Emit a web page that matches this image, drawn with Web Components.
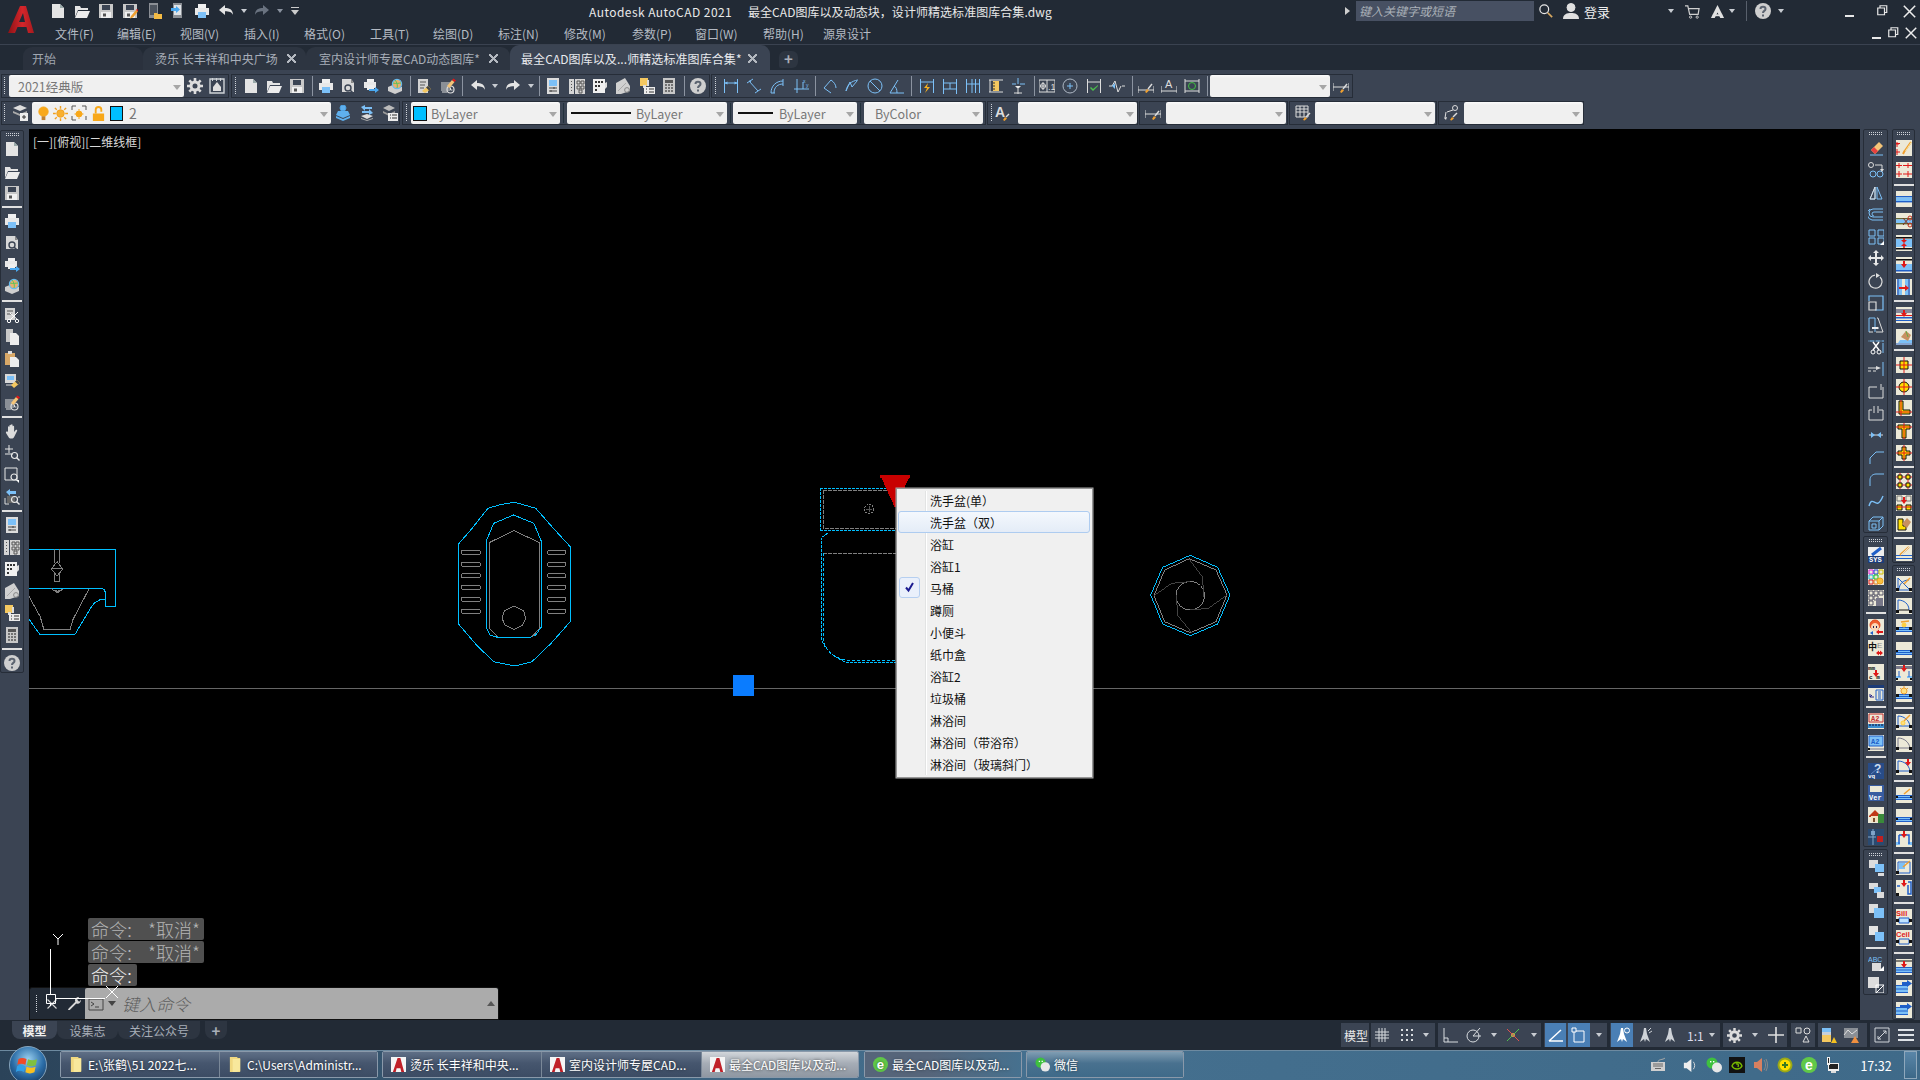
<!DOCTYPE html>
<html lang="zh"><head><meta charset="utf-8"><title>AutoCAD 2021</title>
<style>
html,body{margin:0;padding:0;width:1920px;height:1080px;overflow:hidden;background:#000}
body{font:12px "Noto Sans CJK SC","Noto Sans",sans-serif}
</style></head><body>
<cad-app>
  <cad-header></cad-header>
  <cad-tabs></cad-tabs>
  <cad-toolbars></cad-toolbars>
  <cad-work>
    <cad-canvas>
      <ctx-menu>
        <ctx-item>洗手盆(单）</ctx-item>
        <ctx-item hot>洗手盆（双）</ctx-item>
        <ctx-item>浴缸</ctx-item>
        <ctx-item>浴缸1</ctx-item>
        <ctx-item checked>马桶</ctx-item>
        <ctx-item>蹲厕</ctx-item>
        <ctx-item>小便斗</ctx-item>
        <ctx-item>纸巾盒</ctx-item>
        <ctx-item>浴缸2</ctx-item>
        <ctx-item>垃圾桶</ctx-item>
        <ctx-item>淋浴间</ctx-item>
        <ctx-item>淋浴间（带浴帘）</ctx-item>
        <ctx-item>淋浴间（玻璃斜门）</ctx-item>
      </ctx-menu>
    </cad-canvas>
  </cad-work>
  <cad-status></cad-status>
  <cad-taskbar></cad-taskbar>
</cad-app>
<script>
const S=(d,c='#e4e4e4',w=1)=>`<path d="${d}" fill="none" stroke="${c}" stroke-width="${w}"/>`;
const F=(d,c='#e4e4e4')=>`<path d="${d}" fill="${c}"/>`;
const R=(x,y,w,h,c='#e4e4e4')=>`<rect x="${x}" y="${y}" width="${w}" height="${h}" fill="${c}"/>`;
const O=(x,y,r,c='#e4e4e4',w=1,f='none')=>`<circle cx="${x}" cy="${y}" r="${r}" fill="${f}" stroke="${c}" stroke-width="${w}"/>`;
const BL='#7cc0f7',OR='#f0a030',RD='#e01818',DK='#3b4453',BE='#ece9d8',BN='#1f5fc8';
const pencil=F('M9 13l5-6 2 1.6-5 6-3 .8z',OR)+F('M14 7l1-1 2 1.6-1 1z',RD);
const brush=F('M7 14l2-3 2 1.5-2.5 2.5z',OR)+S('M10 11l4-5','#ddd',1.4);
const mag=O(10.5,10.5,3,'#e8e8e8',1.2)+S('M12.7 12.7l2.8 2.8','#e8e8e8',1.4);
const page=F('M2 1h8l4 4v10H2z')+F('M10 1l4 4h-4z','#9aa');
const floppy=R(1,1,14,14,'#c8c8c8')+R(4,2,8,5,DK)+R(3,9,10,6,'#f0f0f0')+R(5,10.5,3,3,'#555');
const printer=R(4,1,8,4,'#f0f0f0')+R(1,5,14,7,'#e8e8e8')+R(4,9,8,6,BL);
const globe=F('M1 9l7-3 7 3v4l-7 3-7-3z','#cfcfcf')+O(10,6,4.6,'#66bbee',1.2,'#e8b070')+S('M6 5c3 1 6 0 8 0M8 2c2 2 3 6 2 8','#5ac45a');
const arrD=(x,y,c=RD)=>F(`M${x-3} ${y}h6l-3 4z`,c)+R(x-1,y-3,2,3,c);
const wall=(c=BN)=>R(0,5,16,1.4,c)+R(0,10,16,1.4,c)+R(0,6.4,16,3.6,BL);
const win=(extra='')=>R(0,0,16,16,BE)+R(0,8,16,5,BL)+S('M0 8.5h16M0 10.5h16M0 12.5h16',BN)+extra;
const bk=(...p)=>R(0,0,16,16,BE)+p.join('');
const ICONS={
new:page,
open:F('M1 3h5l1 2h7v2H4L1 14z')+F('M4 8h12l-3 7H1z','#ececec'),
save:floppy,
saveas:floppy+pencil,
mopen:R(3,0,9,15,'#8b8f95')+R(4,2,7,10,'#4d545e')+F('M8 10h3l1 1h4v5H8z','#f4bb44'),
msave:R(3,0,9,15,'#8b8f95')+R(4,2,7,10,'#dfe3e8')+F('M1 5h5V3l4 3.5L6 10V8H1z','#4aa8f0'),
print:printer,
preview:F('M2 1h9l3 4v9H2z','#d8d8d8')+F('M11 1l3 4h-3z','#888')+O(8,10,3,'#3b4453',1.4)+S('M10 12l3.5 3.5',DK,1.6),
plot:R(4,1,7,3,'#f0f0f0')+R(1,4,12,6,'#e8e8e8')+R(4,7,7,5,'#eee')+F('M6 11h6V9l4 3-4 3v-2H6z','#4aa8f0'),
pub:globe,
props3:R(2,1,10,14,'#d4d4d4')+S('M4 4h6M4 7h5M4 10h4','#555')+F('M6 13l6-5 3 3-6 4z','#f4c860')+F('M10 9.500l2-1.500 3 3-2 1.500z','#444'),
mark:R(1,4,9,9,'#8a8f96')+S('M2 14h5','#ddd')+O(10.500,11.500,3.500,'#ddd',1.200)+S('M10.500 9.500v2.500h2','#ddd')+F('M7 8l5-6 2.500 2-5 6z','#f4c478')+F('M12 2l1.500-1.500 2.500 2L14.500 4z',RD),
undo:F('M1 7l6-5v3c4 0 8 1 8 7-1-3-4-3.800-8-3.800V12z','#e4e4e4'),
redo:F('M15 7L9 2v3C5 5 1 6 1 12c1-3 4-3.800 8-3.800V12z','#e4e4e4'),
redoD:F('M15 7L9 2v3C5 5 1 6 1 12c1-3 4-3.800 8-3.800V12z','#6a7380'),
gear:O(8,8,4,'#ddd',3)+S('M8 0v3M8 13v3M0 8h3M13 8h3M2.300 2.300l2 2M11.700 11.700l2 2M13.700 2.300l-2 2M4.300 11.700l-2 2','#ddd',2.6),
wspace:S('M1 1h14v14H1z','#cfd3d8',1.4)+F('M4 9l4-5 4 5v4H4z','#dfdfdf')+R(3,0,1,3,'#cfd3d8')+R(7,0,1,3,'#cfd3d8')+R(11,0,1,3,'#cfd3d8'),
cut:R(1,1,10,12,'#d4d4d4')+S('M3 4h6M3 7h5','#555')+S('M6 6l8 7M14 5l-8 8','#fff',1)+O(5,14,1.7,'#fff')+O(13,14,1.7,'#fff'),
copy:F('M2 0h7v4h3v9H2z','#c8c8c8')+F('M6 4h6l3 3v9H6z','#ededed'),
paste:R(1,2,10,12,'#d8a868')+R(4,0,4,3,'#ddd')+F('M6 6h6l3 3v7H6z','#ededed'),
match:R(1,1,11,9,'#d8d8d8')+R(3,3,7,4,BL)+S('M2 12h6','#ddd')+F('M7 12l6-5 3 3-6 5z','#f4c860')+F('M11 8.500l2-1.500 3 3-2 1.500z','#444'),
hand:F('M4 8V4c0-1 1.500-1 1.500 0v3V2.500c0-1 1.500-1 1.500 0V7V2c0-1 1.600-1 1.600 0v5V3.500c0-1 1.500-1 1.500 0V9l1.600-2c.8-.8 2 0 1.400 1l-3 6c-.5 1-1.500 1.500-2.500 1.500H7c-1 0-2-.5-2.500-1.500L2 10c-.5-1 .8-2 1.500-1z','#dcdcdc'),
zoomrt:S('M1 4h8M5 0v8M1 9h8','#e8e8e8')+mag,
zoomw:S('M1 1h12v12H1z','#e8e8e8')+O(10,10,3,'#e8e8e8',1.2,DK)+F('M12 13l3 3v-3z','#fff'),
zoomp:S('M1 9v6h4M15 9v-2','#ddd')+R(3,7,8,7,'#666')+F('M2 3l4-3v2h6v3H6v2z',BL)+mag,
pal:R(2,0,12,16,'#dcdcdc')+R(4,2,8,6,BL)+S('M4 10h8M4 13h8M9 9v2M6 12v2','#444'),
dc:R(0,1,16,15,'#d4d4d4')+R(5,1,1,15,DK)+S('M8 3h3v3H8zM12 3h3v3h-3zM8 8h3v3H8zM12 8h3v3h-3zM10 12h3v3h-3z','#555')+R(2,3,1,1,'#555')+R(2,6,1,1,'#555')+R(2,9,1,1,'#555')+R(2,12,1,1,'#555'),
tool:F('M1 1h12v14H1z','#f0f0f0')+R(3,3,2,2,'#333')+R(6,3,2,2,'#333')+R(9,3,2,2,'#333')+R(3,7,2,2,'#333')+R(6,7,2,2,'#333')+R(3,11,2,2,'#333')+F('M13 5l2-1v5l-2 2z','#ddd'),
sheet:F('M1 5l9-5 5 8v5l-9 3H1z','#d0d0d0')+O(12,12,2.400,'#888')+S('M3 13l8-8','#aaa'),
markup:R(1,0,8,8,'#f4c860')+R(4,7,3,3,'#ddd')+R(8,2,2,6,'#ddd')+R(5,9,11,7,'#ececec')+S('M7 11h1M10 11h5M7 14h1M10 14h5','#333'),
calc:R(2,0,12,16,'#c8c8c8')+R(4,2,8,3,'#555')+S('M4 7h2M7 7h2M10 7h2M4 10h2M7 10h2M10 10h2M4 13h2M7 13h2M10 13h2','#555',1.500),
help:`<circle cx="8" cy="8" r="8" fill="#cfcfcf"/>`+S('M5.500 6c0-3 5-3 5 0 0 2-2.500 1.800-2.500 4','#5c6470',2)+R(7,11.500,2,2,'#5c6470'),
dimlin:S('M1.500 1v14M14.500 1v14M1.500 5h13',BL)+F('M1.500 5l3-1.500v3zM14.500 5l-3-1.500v3z',BL),
dimali:S('M1 5l6-4M9 15l6-4M3 3l9 10',BL)+S('M3 3l2 .5',BL),
dimarc:S('M1 15c0-7 5-12 12-12M1 15h4M4 15c0-6 4-9 9-9M13 1v7',BL),
dimord:S('M3 1v14M0 11h15M9 11v-7',BL)+`<text x="9" y="5" font-size="5" fill="${BL}" font-family="Liberation Sans">x</text><text x="12" y="9" font-size="5" fill="${BL}" font-family="Liberation Sans">y</text>`,
dimrad:S('M2 15h0M2 10L9 2M2 10l7 5M9 2c3 2 5 5 5 8',BL),
dimjog:S('M2 13L6 4l2 5 5-6M2 13c1-6 5-10 12-11',BL),
dimdia:O(8,8,7,BL)+S('M3 3l10 10',BL),
dimang:S('M1 15h14M1 15L9 2M5 8c2 1 3 3 3 7',BL),
dimqk:S('M1.500 1v14M14.500 1v14M1.500 4h13',BL)+F('M9 5L5 10h3l-2 5 5-6H8z','#f4b020'),
dimbase:S('M1.500 1v15M14.500 1v15M1.500 5h13M1.500 11h13M8 5v6',BL),
dimcont:S('M1.500 1v14M7 1v14M10.500 1v14M14.500 1v14M1.500 6h13',BL),
dimspc:S('M1 2h14M1 14h14','#ddd')+R(5,3,6,10,'#f4c860')+S('M5 5h2M5 8h2M5 11h2','#333')+S('M2 2v12','#ddd'),
dimbrk:S('M8 0v6M2 6h4M10 6h5',BL)+S('M8 11v5M4 15h8','#ddd')+F('M5 8h6l-3 3z','#e8e8e8'),
tol:S('M0 2h16v12H0z','#ddd')+O(4,8,2.500,'#ddd')+S('M8 2v12M4 4v8M1 8h6','#ddd')+`<text x="9" y="12" font-size="9" fill="#ddd" font-family="Liberation Sans">.1</text>`,
ctr:O(8,8,7,'#aeb8c4')+S('M8 5v6M5 8h6',BL),
insp:S('M1.500 1v14M14.500 1v14M1.500 4h13','#ddd')+F('M4 10l3 3 5-5v-1L7 11l-2-2z','#4cc04c'),
jog:S('M0 8h3M13 8h3M3 8l3-5 3 11 3-6','#ddd')+F('M3 8l3-3v6z',BL),
dimed:S('M0 8v7M16 8v7M0 12h16','#ddd')+brush,
dimtxt:S('M0 8v7M16 8v7M0 13h16','#ddd')+`<text x="4" y="10" font-size="11" fill="#ddd" font-family="Liberation Sans">A</text>`,
dimup:S('M1 1v14M15 1v14M1 3h14M1 13h14','#ddd')+O(8,8,3.500,'#42c042'),
dimsty:S('M0 5v8M16 5v8M0 9h16','#ddd')+brush,
txtsty:`<text x="1" y="12" font-size="14" font-weight="bold" fill="#ddd" font-family="Liberation Sans">A</text>`+F('M9 15l2-3 2 1.500-2.500 2.500z',OR)+S('M12 12l3-3','#ddd',1.400),
tblsty:S('M1 1h12v11H1zM1 4h12M1 7h12M5 1v11M9 1v11','#ddd')+F('M8 15l2-3 2 1.500-2.500 2z',OR)+S('M11 12l4-4','#ddd',1.500),
mlsty:O(12,3,2.500,'#ddd')+S('M10 5L4 7M3 7L2 13','#ddd')+F('M1 13l2 2 1-3z','#ddd')+F('M7 15l2-3 2 1.500-2.500 2z',OR)+S('M10 12l4-4','#ddd',1.400),
layer:F('M1 3l7-3 7 3-7 3z','#ddd')+F('M1 6l7 3 7-3v2l-7 3-7-3z','#aaa')+R(8,8,8,8,'#ececec')+S('M12 10v4M10 12h4','#333'),
laycur:O(8,3,3,'#4a9ee0',1,'#5fb0ee')+F('M3 6h10l2 4-7 3-7-3z','#5fb0ee')+F('M1 11l7 3 7-3v2l-7 3-7-3z','#5fb0ee'),
layprev:F('M2 2L6 0v2h7v2H6v2zM14 8l-4 2V8H3V6h7V4z',BL)+F('M2 11l6-2 6 2-6 3z','#ddd')+F('M2 13l6 2 6-2v1l-6 2-6-2z','#aaa'),
laystat:F('M1 3l6-3 6 3-6 3z','#bbb')+F('M1 6l6 3 6-3v2l-6 3-6-3z','#999')+R(6,8,10,8,'#ececec')+S('M8 10h1M8 13h1M10 10h5M10 13h5','#333'),
bulb:O(8,6,5,'#f8a81a',1,'#f8a81a')+R(6,11,4,4,'#c08030'),
sun:O(8,8,4,'#f0a020',1,'#f8b030')+S('M8 0v3M8 13v3M0 8h3M13 8h3M2 2l2 2M12 12l2 2M14 2l-2 2M4 12l-2 2','#f0a020',1.500),
frz:S('M1 5V1h4M11 1h4v4M1 11v4h4M15 11v4','#555')+O(8,9,3,'#f8a81a',1,'#f8a81a')+S('M8 4v1.500M8 12.500V14M3.500 9H5M11 9h1.500','#f8a81a'),
lock:R(2,8,12,8,'#f8a81a')+S('M5 8V4c0-4 6-4 6 0v2','#f8a81a',2),
erase:F('M3 10l8-8 4 4-8 8z','#f4c478')+F('M3 10l3-3 4 4-3 3z','#e84040')+S('M2 15h13',BL),
cpy:O(3,3,2.500,'#ddd')+S('M7 3h7v4','#ddd')+O(5,12,3,BL)+O(12,12,3,BL)+F('M12 7l2 3 2-3z','#ddd'),
mirror:S('M2 14L7 2v12zM9 2l5 12H9z',BL)+S('M2 14L7 2v12z','#ddd'),
offset:S('M15 2H5a4 4 0 0 0 0 8h10M15 5H6a2 2 0 0 0 0 4M15 13H4a6 6 0 0 1-2-11',BL),
array:S('M1 1h6v6H1zM10 1h6v6h-6zM1 9h6v6H1z',BL)+S('M10 9h6v6h-6z',BL)+F('M12 16l4-4v4z','#fff'),
move:S('M8 1v14M1 8h14','#e8e8e8',2)+F('M8 0l3 3H5zM8 16l3-3H5zM0 8l3-3v6zM16 8l-3-3v6z','#e8e8e8'),
rotate:S('M12 4a6.500 6.500 0 1 1-5-1.800','#ddd',1.200)+F('M8 0v5l4-2.500z','#ddd'),
scale:S('M1 6V1h14v14H7',BL,1.200)+S('M1 7h7v8H1z','#ddd',1.200),
stretch:S('M1 15V1h6v14',BL)+S('M9 1h1l5 14H8','#ddd')+S('M1 15h4','#ddd')+F('M4 10h6l-2-2 3 3-3 3 2-2H4z','#eee'),
trim:S('M0 2h16',BL)+R(0,1.500,2,1,DK)+R(6,1.500,2,1,DK)+R(12,1.500,2,1,DK)+S('M5 3l6 8M11 3l-6 8','#fff',1.400)+O(5,13,2,'#fff')+O(11,13,2,'#fff')+S('M15 4v10',BL),
extend:S('M15 1v14',BL)+S('M0 7h8M0 10h3M5 10h3','#ddd')+F('M8 5l5 2-5 2z','#ddd'),
brk:S('M1 4v11h14V4M1 4h8M13 1v6','#ddd'),
brk2:S('M1 5v10h14V5M5 5v0M1 5h3M11 5h4M6 1v7M10 1v7','#ddd'),
join:S('M1 8h14','#ddd')+F('M3 5l4 3-4 3zM13 5L9 8l4 3z',BL),
chamfer:S('M2 15V9l6-6h8',BL),
fillet:S('M2 15V9c0-4 3-6 6-6h8',BL),
spline:S('M1 13c4-13 7 7 14-10',BL,1.400),
box3:S('M1 6v9h10V6zM1 6l4-4h10v9l-4 4M11 6l4-4M4 9h4v4H4z',BL),
sys:R(0,0,16,16,'#1c3c78')+R(0,0,16,9,'#eee')+S('M4 8L13 1',BN,3)+`<text x="1" y="15" font-size="7" font-weight="bold" fill="#fff" font-family="Liberation Mono">SYS</text>`,
cgrid:R(0,0,16,16,BE)+S('M1 1h4v4H1z','#e020e0')+S('M6 1h4v4H6z','#2040e0')+S('M11 1h4v4h-4z','#d0c000')+S('M1 6h4v4H1z','#20c0e0')+S('M6 6h4v4H6z','#20c020')+S('M1 11h4v4H1z','#e02020')+S('M6 11h4v4H6z','#e08020')+O(12,12,3,'#e8a020',1,'#f8c040'),
ggrid:R(0,0,16,16,BE)+S('M1 1h4v4H1zM6 1h4v4H6zM11 1h4v4h-4zM1 6h4v4H1zM6 6h4v4H6zM1 11h4v4H1z','#556')+R(8,8,7,8,'#778'),
anime:R(0,0,16,16,BE)+O(7,6,5,'#e04820',1,'#f06030')+O(7,8,3.500,'#fcd8b8',1,'#fcd8b8')+R(5,7,1,2,'#225')+R(8,7,1,2,'#225')+F('M8 13l3-2.500v1.500h4v2h-4v1.500z',RD)+F('M8 13h0M2 14l3-2v4z',BN),
zhe:R(0,0,16,16,BE)+`<text x="0" y="10" font-size="9" font-weight="bold" fill="#111" font-family="Noto Sans CJK SC">中</text><text x="9" y="8" font-size="8" fill="#888" font-family="Liberation Sans">E</text>`+F('M8 13l3-2.500V12h1V10.500l3 2.500-3 2.500V14h-1v1.500z',RD),
mmcm:R(0,0,16,16,BE)+`<text x="0" y="6" font-size="6" font-weight="bold" fill="#111" font-family="Liberation Mono">mm</text><text x="1" y="15" font-size="6" font-weight="bold" fill="#111" font-family="Liberation Mono">c m</text>`+arrD(8,9),
lstb:R(0,0,16,16,BE)+R(0,0,16,3,'#1c3c78')+S('M8 5h7v10H8zM10 7h3M10 9h3M10 11h3M10 13h3',BN)+S('M2 9v3h4M4 10l-2 2','#228'),
a2a:R(0,0,16,16,BE)+S('M1 1h14v8H1z','#c03030')+`<text x="3" y="8" font-size="7" font-weight="bold" fill="#c03030" font-family="Liberation Mono">A2</text>`+R(0,11,16,4,'#3b8ed0')+S('M2 11v2M5 11v2M8 11v2M11 11v2M14 11v2','#113'),
a2b:R(0,0,16,16,BE)+R(1,1,14,10,BL)+S('M1 1h14v10H1z',BN)+`<text x="3" y="9" font-size="7" font-weight="bold" fill="${BN}" font-family="Liberation Mono">A2</text>`+R(0,13,2,2,'#111')+S('M2 14h14','#778'),
vq:R(0,0,16,16,'#284c88')+S('M3 11l6-5 4 5','#5b80bb')+`<text x="6" y="10" font-size="12" font-weight="bold" fill="#cde" font-family="Liberation Sans">?</text><text x="0" y="15" font-size="6" font-weight="bold" fill="#fff" font-family="Liberation Mono">vq</text>`,
ver:R(0,0,16,16,'#385ca0')+R(2,1,12,6,BE)+`<text x="1" y="15" font-size="7" font-weight="bold" fill="#fff" font-family="Liberation Mono">Ver</text>`,
house:R(0,0,16,16,BE)+F('M1 9l6-6 6 6v1H1z','#c03818')+R(3,9,8,6,'#f4e0c0')+R(5,11,2,4,'#7a5030')+R(10,7,6,9,'#3a8a3a'),
mapic:R(0,0,16,16,'#2a4a70')+R(3,2,4,4,'#7aa0c8')+R(9,7,6,6,'#c02020')+S('M0 8h8M5 0v16','#88a8c8'),
ord1:R(1,0,9,8,'#dcdcdc')+R(7,4,9,8,BL)+F('M10 13h6v3h-6z','#dcdcdc'),
ord2:R(1,1,9,6,'#dcdcdc')+R(6,5,7,6,BL)+R(9,10,7,6,'#dcdcdc'),
ord3:R(1,0,9,9,'#dcdcdc')+R(6,4,10,10,BL),
ord4:R(1,0,9,9,'#e4e4e4')+R(7,6,9,9,BL),
abc:`<text x="0" y="7" font-size="7" fill="${BL}" font-family="Liberation Sans">ABC</text>`+R(4,8,9,8,'#dcdcdc')+F('M11 16l5-5v5z','#fff'),
sclb:R(0,0,11,11,'#dcdcdc')+S('M8 16V8h8v8zM8 16l8-8','#fff'),
c1:bk(S('M1 2v5M4 3v0M0 4h3M1 9v6M0 12h4',RD),R(0,3,4,1,RD),S('M8 12l7-10M7 14l1.500-3',OR,2),S('M9.500 11l6-9','#f4e0a0',1)),
c2:bk(S('M3 1v5M0 3.500h6M12 1v5M9 3.500h7M3 9v6M0 12h6M12 9v6M9 12h7',RD),S('M7 3.500h2M7 12h2',RD)),
c3:R(0,0,16,16,BE)+wall(),
c4:R(0,0,16,16,BE)+wall('#663')+S('M7 5l6 7M13 5l-6 7','#803020')+O(14,5,2,'#c03020')+O(14,12,2,'#c03020'),
c5:R(0,0,16,16,BE)+R(0,2,16,1.500,'#111')+R(0,13,16,1.500,'#111')+R(0,4,16,8,BL)+S('M8 3v3M8 10v3',RD,1.600)+F('M5 5h6L8 8zM5 11h6L8 8z',RD),
c6:R(0,0,16,16,BE)+R(0,2,16,1.500,'#111')+R(0,7,16,6,BL)+R(0,13,16,1.500,BN)+arrD(8,7),
c7:R(0,0,16,16,BE)+S('M2 0v16M13 0v16',BN,1.500)+R(3,0,3,16,BL)+R(9,0,3,16,BL)+F('M3 8h6V6l4 3-4 3v-2H3z',RD),
c8:R(0,0,16,16,BE)+R(0,2,16,4,'#889')+R(0,8,16,1,RD)+R(0,10,16,1.500,BN)+R(0,13,16,1,BN)+arrD(8,6),
c9:R(0,0,16,16,BE)+F('M2 14l2-3h12v3z',BL)+F('M5 8l5-6 5 4-3 6z','#c89060')+S('M10 2l2 6','#6a4')+S('M0 15h16',BN),
y1:R(0,0,16,16,BE)+R(4,4,8,8,'#ffe000')+S('M4 4h8v8H4z','#111')+S('M8 0v16M0 8h16',RD),
y2:R(0,0,16,16,BE)+O(8,8,5,'#111',1,'#ffe000')+S('M8 0v16M0 8h16',RD),
y3:R(0,0,16,16,BE)+F('M3 1h4v9h7v4H3z','#ffe000')+S('M3 1h4v9h7v4H3z','#111')+S('M5 0v16M0 12h16',RD),
y4:R(0,0,16,16,BE)+F('M2 2h12v4h-4v9H6V6H2z','#ffe000')+S('M2 2h12v4h-4v9H6V6H2z','#111')+S('M8 0v16M0 4h16',RD),
y5:R(0,0,16,16,BE)+F('M6 2h4v4h4v4h-4v4H6v-4H2V6h4z','#ffe000')+S('M6 2h4v4h4v4h-4v4H6v-4H2V6h4z','#111')+S('M8 0v16M0 8h16',RD),
y6:R(0,0,16,16,BE)+S('M0 4h16M0 12h16M4 0v16M12 0v16',RD)+R(2,2,4,4,'#ffe000')+R(10,2,4,4,'#ffe000')+R(2,10,4,4,'#ffe000')+R(10,10,4,4,'#ffe000')+S('M2 2h4v4H2zM10 2h4v4h-4zM2 10h4v4H2zM10 10h4v4h-4z','#111'),
y7:R(0,0,16,16,BE)+S('M1 1h5v5H1zM10 1h5v5h-5z','#777')+R(1,10,5,5,'#ffe000')+R(10,10,5,5,'#ffe000')+S('M1 10h5v5H1zM10 10h5v5h-5z','#111')+S('M0 12h16',RD)+arrD(8,5),
y8:R(0,0,16,16,BE)+F('M2 3h5v7h3v4H2z','#ffe000')+S('M2 3h5v7h3v4H2z','#111')+F('M6 8l5-6 4 4-4 6z','#c89060'),
y9:R(0,0,16,16,BE)+R(0,10,16,1,BN)+R(0,13,16,1,BN)+S('M4 10L13 2',OR,2)+S('M5 10l8-8','#ddd'),
d1:R(0,0,16,16,BE)+S('M2 14V2l12 12z',BN)+S('M3 14c0-6 4-10 10-10',BN)+R(0,12,3,3,'#111')+R(13,12,3,3,'#111')+S('M8 8l6-6',OR,1.500),
d2:R(0,0,16,16,BE)+S('M2 12V2c6 0 11 4 11 10',BN)+S('M3 12h10','#111')+R(0,12,3,3,'#111')+R(13,12,3,3,'#111'),
d3:win(S('M5 3l8-1',OR,1.400)+O(8,6,2,'#ffd040',1,'#ffd040')+R(0,8,3,3,'#111')+R(13,8,3,3,'#111')),
d4:win(R(0,8,2,2,'#111')+R(14,8,2,2,'#111')),
d5:R(0,0,16,16,BE)+R(0,1,16,3,'#778')+R(0,11,5,2,BL)+R(11,11,5,2,BL)+S('M3 6v6M13 6v6',BN)+arrD(8,3)+R(0,13,2,2,'#111')+R(14,13,2,2,'#111'),
d6:win(O(8,5,3,OR,1,'#ffe080')+S('M8 0v2M4 2l2 2M12 2l-2 2',OR)+R(0,8,3,3,'#111')+R(13,8,3,3,'#111')),
d7:R(0,0,16,16,BE)+S('M2 2v10h12M2 2c6 0 11 4 12 10',BN)+S('M8 7l6-6',OR,1.500)+R(0,11,3,3,'#111')+R(13,11,3,3,'#111')+O(7,9,2,'#ffd040',1,'#ffe080'),
d8:R(0,0,16,16,BE)+S('M2 2v10h12M2 2c6 0 11 4 12 10','#778')+R(0,11,3,3,'#111')+R(13,11,3,3,'#111'),
d9:R(0,0,16,16,BE)+S('M2 2v10h12M2 2c6 0 11 4 12 10',BN)+R(0,11,3,3,'#111')+R(13,11,3,3,'#111')+arrD(12,3),
d10:win(S('M8 7l6-5',OR,1.500)+R(0,9,2,2,'#111')+R(14,9,2,2,'#111')),
d11:win(R(0,9,2,2,'#111')+R(14,9,2,2,'#111')),
d12:R(0,0,16,16,BE)+R(0,11,4,3,BL)+R(12,11,4,3,BL)+S('M3 4h10v9M3 4v9',BN,1.500)+arrD(8,3),
d13:R(0,0,16,16,BE)+S('M2 14V3h12v11H2z',BN)+R(3,4,6,6,BL)+S('M7 8l7-6',OR,1.500)+R(0,12,3,3,'#111'),
d14:R(0,0,16,16,BE)+S('M1 6h3M12 2h3v12h-3v-9',BN,1.500)+arrD(8,3)+R(0,13,3,3,'#111'),
sill:R(0,0,16,16,BE)+`<text x="0" y="7" font-size="7.500" font-weight="bold" fill="#e01818" font-family="Liberation Sans">Sill</text>`+R(3,9,10,5,'#bfe2ff')+S('M3 9h10v5H3z',BN)+R(0,10,3,3,'#111')+R(13,10,3,3,'#111'),
ceil:R(0,0,16,16,BE)+`<text x="0" y="7" font-size="7.500" font-weight="bold" fill="#e01818" font-family="Liberation Sans">Ceil</text>`+R(3,9,10,5,BE)+S('M3 9h10v5H3z',BN)+R(0,10,3,3,'#111')+R(13,10,3,3,'#111'),
l1:R(0,0,16,16,BE)+S('M0 2h16','#111')+R(0,8,16,6,BL)+S('M0 8.500h16M0 11h16M0 13.500h16',BN)+arrD(8,5),
l2:R(0,0,16,16,BE)+R(0,5,12,8,BL)+S('M0 5.500h12M0 9h12M0 12.500h12',BN)+F('M6 2h5V0l5 3.500-5 3.500V5H6z',BN),
l3:R(0,0,16,16,BE)+R(0,5,12,8,BL)+S('M0 5.500h12M0 9h12M0 12.500h12',BN)+F('M4 3h7V1l5 3.500-5 3.500V6H4z',BN),
xx:S('M2 2l12 12M14 2L2 14','#d8d8d8',1.500),
wrench:F('M2 15l1-2 7-7c-1-2 0-5 4-5l-2 3 2 2 2-2c0 3-2 5-5 4L4 15z','#d8d8d8'),
term:S('M1 3h14v11H1z','#444')+S('M3 6l3 2-3 2M7 11h4','#444'),
search:O(6,6,5,'#e8e8e8',1.400)+S('M10 10l5 5','#d8a860',2),
user:O(8,4.500,4,'#e0e0e0',1,'#e0e0e0')+F('M0 16c0-5 4-6 8-6s8 1 8 6z','#e0e0e0'),
cart:S('M0 2h3l2 9h9l1-6H4','#cfcfcf',1.300)+O(6,14,1.200,'#cfcfcf')+O(13,14,1.200,'#cfcfcf'),
autod:F('M8 1L1 15h4l3-6 3 6h4z','#e0e0e0')+R(3,11,10,2,'#e0e0e0'),
grid:S('M1 5h14M1 8h14M1 11h14M5 1v14M8 1v14M11 1v14','#d8dce0'),
snap:`<g fill="#d8dce0"><rect x="2" y="2" width="2" height="2"/><rect x="7" y="2" width="2" height="2"/><rect x="12" y="2" width="2" height="2"/><rect x="2" y="7" width="2" height="2"/><rect x="7" y="7" width="2" height="2"/><rect x="12" y="7" width="2" height="2"/><rect x="2" y="12" width="2" height="2"/><rect x="7" y="12" width="2" height="2"/><rect x="12" y="12" width="2" height="2"/></g>`,
ortho:S('M2 1v14h14M2 11h4v4','#d8dce0'),
polar:O(7,9,6,'#d8dce0')+S('M7 9l7-8M7 9h8','#d8dce0'),
iso:S('M2 2l12 12','#e05050')+S('M14 2L8 8','#50c050')+S('M8 8l-6 6','#50c050')+O(8,8,1.500,'#e0a050'),
osn:S('M1 14h14M1 14L13 3','#fff',1.500),
trk:S('M3 4h10v11H3z','#fff')+R(1,1,4,4,'#4a7fb5')+S('M1 1h4v4H1z','#fff'),
anno1:F('M7 1h2l1 6 3 8-4-3-1 3-1-3-4 3 3-8z','#fff')+O(13,3.500,2.500,'#fff'),
anno2:F('M7 1h2l1 6 3 8-4-3-1 3-1-3-4 3 3-8z','#cfd3d8')+S('M11 4l3-3M12 6l3-2','#cfd3d8'),
anno3:F('M7 1h2l1 6 3 8-4-3-1 3-1-3-4 3 3-8z','#cfd3d8'),
plus:S('M8 0v16M0 8h16','#e0e0e0',1.600),
unit:S('M1 1h5v5H1z','#ddd')+O(12,4,3,'#ddd')+S('M8 15h6l-3-6z','#ddd'),
warn1:R(1,1,9,12,'#c8d0da')+R(1,1,9,4,BL)+F('M1 8h9v7H1z','#f4c860')+F('M10 16l3-6 3 6z','#f4c020'),
warn2:R(1,1,14,10,'#8a8f96')+S('M1 8l4-5 4 4 5-4','#ddd')+F('M8 16l4-7 4 7z','#f09040'),
full:S('M1 1h14v14H1z','#d0d4da')+S('M4 12l8-8M9 4h3v3M4 9v3h3','#d0d4da'),
ham:S('M0 3h16M0 8h16M0 13h16','#dfe3e8',2),
folder:F('M2 0h8v1h3v15H2z','#f0d880')+F('M5 2h8v13l-4 1H5z','#f8e89c'),
acad:R(0,0,16,16,'#f5f5f5')+F('M2 16L7 1h3l4 15h-3l-1-4H6l-1 4z','#c02028'),
ie:O(8,8,8,'#60c848',0,'#60c848')+`<text x="8" y="13" text-anchor="middle" font-size="14" font-weight="bold" fill="#fff" font-family="Liberation Sans">e</text>`,
wechat:O(6,6,5.500,'#3ec03e',0,'#3ec03e')+O(11,10.500,5,'#e8e8e8',0,'#e8e8e8')+R(4,4,1.400,1.400,'#fff')+R(7,4,1.400,1.400,'#fff'),
kbd:F('M1 5h14v9H1z','#cfcfcf')+S('M3 7h10M3 9h10M5 11.500h6','#666')+S('M8 5c0-3 5-2 7-4','#aaa'),
vol:F('M2 5h3l5-4v14l-5-4H2z','#eee')+S('M12 4c2 2 2 6 0 8','#ddd'),
nv:R(0,0,16,16,'#111')+S('M3 9c2-5 8-5 10 0-2 4-8 4-10 0zM7 7c2-1 3 1 2 3','#76b900',1.400),
spk:F('M2 5h3l5-4v14l-5-4H2z','#d88060')+S('M12 3c2 3 2 7 0 10M14 2c2 4 2 8 0 12','#888'),
yg:O(8,8,7.500,'#8b9a16',0,'#9aa818')+O(8,8,5.500,'#ffe000',0,'#ffe000')+S('M8 5v6M5 8h6','#3a7a20',2),
net:R(3,6,11,8,'#f0f0f0')+R(4,7,9,5,'#222')+R(6,14,5,2,'#ddd')+R(2,0,3,8,'#f0f0f0')+R(3,1,1,5,'#222'),
rst:S('M1 4h9v9H1zM4 4V1h9v9h-3','#e8e8e8',1.600),
cls:S('M1 1l14 14M15 1L1 15','#ededed',1.900),
orb:`<defs><radialGradient id="g" cx=".5" cy=".35" r=".75"><stop offset="0" stop-color="#9ad0f0"/><stop offset=".55" stop-color="#2c6ea8"/><stop offset="1" stop-color="#102f54"/></radialGradient></defs><circle cx="8" cy="8" r="7.800" fill="url(#g)" stroke="#a8c4d8" stroke-width=".3"/><path d="M4 5.500c1-.6 2-.6 3.400 0l-.5 2.400c-1.300-.6-2.300-.6-3.400 0z" fill="#f04a28"/><path d="M8 5.600c1.300.6 2.400.6 3.800 0l-.5 2.500c-1.300.6-2.500.6-3.800 0z" fill="#80c040"/><path d="M3.400 8.500c1.100-.6 2.100-.6 3.400 0l-.5 2.400c-1.300-.6-2.300-.6-3.400 0z" fill="#30a0e8"/><path d="M7.400 8.700c1.300.6 2.500.6 3.800 0l-.5 2.400c-1.300.6-2.500.6-3.800 0z" fill="#f8c020"/>`
};
const PS=`.p{flex:none;display:inline-flex;align-items:center;justify-content:center;height:100%;white-space:nowrap}`;
const place=(it,x0)=>{let c=x0;return it.map(i=>{const h=`<span class="p" style="margin-left:${i.x-c}px;width:${i.w}px">${i.h}</span>`;c=i.x+i.w;return h}).join('')};
const placeV=(it,y0)=>{let c=y0;return it.map(i=>{const h=`<span class="p" style="margin-top:${i.y-c}px;height:${i.h}px;width:100%">${i.c}</span>`;c=i.y+i.h;return h}).join('')};
const ic=(n,cx,s=16)=>({x:cx-s/2,w:s,h:`<cad-icon name="${n}" size="${s}"></cad-icon>`});
const dd=(cx,c='#c8ccd2')=>({x:cx-3,w:6,h:`<i style="width:0;height:0;border:3px solid transparent;border-top:4px solid ${c};border-bottom:0"></i>`});
const sep=(x,c='#8b93a0')=>({x,w:1,h:`<i style="width:1px;height:20px;background:${c}"></i>`});
const tx=(x,w,t,st='')=>({x,w,h:`<span style="width:100%;${st}">${t}</span>`});
const DOTS=`background-image:conic-gradient(#cfd3d9 25%,transparent 0);background-size:2px 2px`;
const grip=x=>({x,w:3,h:`<i style="width:3px;height:18px;${DOTS}"></i>`});
const combo=(a,b,inner='')=>({x:a,w:b-a,h:`<cad-combo>${inner}</cad-combo>`});
const ctx=(name,x0,x1,items)=>({x:x0,w:x1-x0,h:`<div class="g" style="width:100%">${place(items,x0+1)}</div>`});
const SET={};
const v=(n,y)=>({y:y-8,h:16,c:`<cad-icon name="${n}" size="16"></cad-icon>`});
const hs=y=>({y:y-1,h:2,c:`<i style="width:20px;height:1.500px;background:#e0e0e0"></i>`});
const hg=y=>({y:y-2,h:4,c:`<i style="width:15px;height:3px;${DOTS}"></i>`});
SET.left=[[130,673,[hg(134),v('new',149),v('open',172),v('save',193),hs(207),v('print',221),v('preview',243),v('plot',265),v('pub',286),hs(301),v('cut',315),v('copy',337),v('paste',359),v('match',381),v('mark',403),hs(417),v('hand',431),v('zoomrt',453),v('zoomw',475),v('zoomp',497),hs(511),v('pal',525),v('dc',547),v('tool',569),v('sheet',591),v('markup',613),v('calc',635),hs(649),v('help',663)]]];
SET.r1=[[129,533,[hg(133),v('erase',148),v('cpy',170),v('mirror',193),v('offset',215),v('array',237),v('move',258),v('rotate',281),v('scale',303),v('stretch',325),v('trim',347),v('extend',369),v('brk',391),v('brk2',413),v('join',435),v('chamfer',457),v('fillet',479),v('spline',501),v('box3',523)]],
[536,847,[hg(540),v('sys',555),v('cgrid',577),v('ggrid',598),hs(613),v('anime',627),v('zhe',648),v('mmcm',672),v('lstb',693),hs(707),v('a2a',721),v('a2b',743),hs(757),v('vq',771),v('ver',793),v('house',815),v('mapic',837)]],
[849,995,[hg(854),v('ord1',868),v('ord2',890),v('ord3',912),v('ord4',934),hs(948),v('abc',963),v('sclb',985)]]];
SET.r2=[[129,563,[hg(133),v('c1',148),v('c2',170),hs(185),v('c3',199),v('c4',221),v('c5',243),v('c6',265),v('c7',287),hs(301),v('c8',315),v('c9',337),hs(350),v('y1',365),v('y2',387),v('y3',408),v('y4',431),v('y5',453),hs(467),v('y6',481),v('y7',503),v('y8',524),hs(538),v('y9',553)]],
[565,1020,[hg(569),v('d1',584),v('d2',606),v('d3',627),v('d4',650),v('d5',673),v('d6',694),hs(708),v('d7',722),v('d8',744),v('d9',767),hs(781),v('d10',795),v('d11',817),v('d12',839),hs(853),v('d13',867),v('d14',888),hs(903),v('sill',917),v('ceil',938),hs(953),v('l1',967),v('l2',988),v('l3',1010)]]];

class Base extends HTMLElement{
  constructor(){super();this.attachShadow({mode:'open'})}
  connectedCallback(){if(!this._r){this._r=1;this.shadowRoot.innerHTML=this.html()}}
}
class CadIcon extends Base{html(){const s=this.getAttribute('size')||16;return `<style>:host{display:inline-block;width:${s}px;height:${s}px;line-height:0;flex:none}svg{display:block}</style><svg width="${s}" height="${s}" viewBox="0 0 16 16">${ICONS[this.getAttribute('name')]||''}</svg>`}}
class CadCombo extends Base{html(){return `<style>:host{display:flex;width:100%;height:22px;box-sizing:border-box;align-items:center;position:relative;background:linear-gradient(#fbfbfb,#f0f0f0 3px);color:#777;font-size:12.500px;border-radius:2px}
${PS}.i{display:flex;align-items:center;height:100%;flex:1;min-width:0;overflow:hidden}
.t{flex:none;width:0;height:0;border:4.500px solid transparent;border-top:5px solid #a6a6a6;border-bottom:0;margin:2px 3px 0 0}</style><div class="i"><slot></slot></div><i class="t"></i>`}}
class CadApp extends Base{html(){return `<style>:host{display:flex;flex-direction:column;width:1920px;height:1080px;background:#222a35;color:#c8ccd2;font:12px "Noto Sans CJK SC","Noto Sans",sans-serif;overflow:hidden}</style><slot></slot>`}}
class CadHeader extends Base{html(){
const row1=place([ic('new',58),ic('open',82),ic('save',106),ic('saveas',130),ic('mopen',154),ic('msave',178),ic('print',202),ic('undo',226),dd(244),ic('redoD',262),dd(280,'#8b93a0'),
{x:291,w:8,h:'<i style="width:8px;height:7px;border-top:1.500px solid #ccc;position:relative;display:block"><b style="display:block;width:0;height:0;border:4px solid transparent;border-top:5px solid #ccc;margin-top:2px"></b></i>'},
tx(589,146,'Autodesk AutoCAD 2021','color:#e8e8e8;letter-spacing:.45px'),tx(748,310,'最全CAD图库以及动态块，设计师精选标准图库合集.dwg','color:#e8e8e8;letter-spacing:.05px'),
{x:1345,w:5,h:'<i style="width:0;height:0;border:4px solid transparent;border-left:5px solid #cfcfcf;border-right:0"></i>'},
{x:1356,w:178,h:'<span style="display:block;width:100%;height:20px;line-height:20px;margin-top:0;background:#475062;color:#aab0b8;font-style:italic;padding-left:3px;box-sizing:border-box">键入关键字或短语</span>'},
ic('search',1546,14),ic('user',1571,16),tx(1584,28,'登录','color:#eee;font-size:13px'),dd(1671),ic('cart',1692,15),ic('autod',1717,15),dd(1732),
{x:1746,w:1,h:'<i style="width:1px;height:20px;background:#58606c"></i>'},ic('help',1763,16),dd(1781),
{x:1845,w:9,h:'<i style="width:9px;height:2px;background:#e8e8e8;margin-top:9px"></i>'},
ic('rst',1883,12),ic('cls',1909,13)],40);
const row2=place([[55,'文件(F)'],[117,'编辑(E)'],[180,'视图(V)'],[244,'插入(I)'],[304,'格式(O)'],[370,'工具(T)'],[433,'绘图(D)'],[498,'标注(N)'],[564,'修改(M)'],[632,'参数(P)'],[695,'窗口(W)'],[763,'帮助(H)'],[823,'源泉设计']].map(([x,t])=>tx(x,t.length==4?50:45,t,'color:#b4bac3')).concat([
{x:1872,w:9,h:'<i style="width:9px;height:2px;background:#e8e8e8;margin-top:9px"></i>'},ic('rst',1894,12),ic('cls',1911,12)]),40);
return `<style>:host{display:flex;height:45px;box-sizing:border-box;background:#222a35;border-bottom:1px solid #3a4250}${PS}
.l{flex:none;width:40px;padding:6px 0 0 8px;box-sizing:border-box}.c{flex:1;display:flex;flex-direction:column}.r{display:flex;height:22px;align-items:center}</style>
<div class="l"><svg width="26" height="28" viewBox="0 0 26 28"><defs><linearGradient id="a" x1="0" x2="1"><stop offset="0" stop-color="#8c1216"/><stop offset=".55" stop-color="#d5262b"/><stop offset="1" stop-color="#a81a1e"/></linearGradient></defs><path fill="url(#a)" d="M0 27L12 0h6l8 27h-6l-1.500-6H9.500L7 27zM11 16h6l-2-9z"/></svg></div>
<div class="c"><div class="r">${row1}</div><div class="r">${row2}</div></div>`}}
class CadTabs extends Base{html(){
return `<style>:host{display:flex;height:25px;padding-left:23px;background:#222a35;align-items:flex-end}
.t{box-sizing:border-box;display:flex;align-items:center;height:23px;border-radius:9px 9px 0 0;background:#2d3541;color:#a8aeb8;white-space:nowrap;flex:none}
.a{background:#3b4453;color:#e8eaee;height:25px;padding-top:2px}.s{background:#2a313d;color:#a0a6b0}
.x{flex:none;width:9px;height:9px;background:linear-gradient(45deg,transparent 42%,#b4b9c0 42%,#b4b9c0 58%,transparent 58%),linear-gradient(-45deg,transparent 42%,#b4b9c0 42%,#b4b9c0 58%,transparent 58%)}
.p{margin-left:9px;width:19px;height:17px;margin-bottom:2px;background:#2d3541;border-radius:6px 6px 6px 2px;color:#a8aeb8;font-size:15px;line-height:16px;text-align:center;font-weight:bold}</style>
<div class="t s" style="width:120px;padding-left:9px">开始</div>
<div class="t" style="width:163px;padding-left:12px"><span style="width:125px">烫乐 长丰祥和中央广场</span><span class="x" style="margin-left:7px"></span></div>
<div class="t" style="width:204px;padding-left:13px"><span style="width:162px">室内设计师专屋CAD动态图库*</span><span class="x" style="margin-left:8px"></span></div>
<div class="t a" style="width:260px;padding-left:11px"><span style="width:220px;letter-spacing:.08px">最全CAD图库以及...师精选标准图库合集*</span><span class="x" style="margin-left:7px"></span></div>
<div class="p">+</div>`}}
class CadToolbars extends Base{html(){
const row1=place([
ctx('',1,229,[grip(3),combo(9,184,'<span style="margin-left:9px">2021经典版</span>'),ic('gear',195),ic('wspace',217)]),
ctx('',231,710,[grip(234),ic('new',251),ic('open',274),ic('save',297),sep(312),ic('print',326),ic('preview',348),ic('plot',371),ic('pub',395),sep(410),ic('props3',424),ic('mark',448),sep(462),ic('undo',478),dd(495),ic('redo',513),dd(531),sep(539),ic('pal',553),ic('dc',577),ic('tool',600),ic('sheet',623),ic('markup',647),ic('calc',669),sep(684),ic('help',698)]),
ctx('',711,1353,[grip(714),ic('dimlin',731),ic('dimali',754),ic('dimarc',778),ic('dimord',802),sep(815),ic('dimrad',830),ic('dimjog',852),ic('dimdia',875),ic('dimang',897),sep(911),ic('dimqk',927),ic('dimbase',950),ic('dimcont',973),ic('dimspc',996),ic('dimbrk',1018),sep(1034),ic('tol',1047),ic('ctr',1070),ic('insp',1094),ic('jog',1117),sep(1132),ic('dimed',1146),ic('dimtxt',1169),ic('dimup',1192),sep(1207),combo(1210,1330),ic('dimsty',1341)])
],0);
const line=w=>`<i style="display:block;flex:none;width:${w}px;height:1.500px;background:#111"></i>`;
const row2=place([
ctx('',1,400,[grip(3),ic('layer',20),combo(32,331,`<cad-icon name="bulb" size="15" style="margin-left:4px"></cad-icon><cad-icon name="sun" size="15" style="margin-left:2px"></cad-icon><cad-icon name="frz" size="16" style="margin-left:3px"></cad-icon><cad-icon name="lock" size="15" style="margin-left:4px"></cad-icon><i style="flex:none;width:13px;height:15px;background:#00bfff;border:1px solid #111;box-sizing:border-box;margin-left:4px"></i><span style="margin-left:6px;font-size:14px">2</span>`),ic('laycur',343),ic('layprev',367),ic('laystat',390)]),
ctx('',402,986,[grip(405),combo(411,560,`<i style="flex:none;width:14px;height:15px;background:#00bfff;border:1px solid #111;box-sizing:border-box;margin-left:2px"></i><span style="margin-left:4px">ByLayer</span>`),sep(563,'#22303c'),combo(567,727,`<span style="margin-left:4px"></span>${line(60)}<span style="margin-left:5px">ByLayer</span>`),sep(730,'#22303c'),combo(733,857,`<span style="margin-left:5px"></span>${line(35)}<span style="margin-left:6px">ByLayer</span>`),sep(860,'#22303c'),combo(864,983,`<span style="margin-left:11px">ByColor</span>`)]),
ctx('',987,1138,[grip(990),ic('txtsty',1002),combo(1018,1137)]),
ctx('',1139,1288,[ic('dimsty',1153),combo(1166,1286)]),
ctx('',1289,1437,[ic('tblsty',1303),combo(1315,1435)]),
ctx('',1438,1584,[ic('mlsty',1451),combo(1464,1583)])
],0);
return `<style>:host{display:flex;flex-direction:column;height:59px;box-sizing:border-box;padding-top:4px;gap:3px;background:#3b4453}${PS}
.r{display:flex;height:24px}.g{display:flex;height:24px;box-sizing:border-box;border:1px solid #262d38;border-left-width:1px;align-items:center;background:#3b4453;overflow:hidden}</style>
<div class="r">${row1}</div><div class="r">${row2}</div>`}}
class ToolStrip extends Base{html(){const s=SET[this.getAttribute('set')];const w=this.getAttribute('w');
return `<style>:host{display:flex;flex-direction:column;width:${w}px;flex:none}${PS}
.g{box-sizing:border-box;display:flex;flex-direction:column;border:1px solid #262d38;border-radius:2px;align-items:center;width:100%;overflow:hidden;flex:none}</style>`+
(()=>{let c=129,o='';for(const [a,b,it] of s){o+=`<div class="g" style="margin-top:${a-c}px;height:${b-a}px">${placeV(it,a+1)}</div>`;c=b}return o})()}}
class CadWork extends Base{html(){return `<style>:host{display:flex;height:891px;background:#3b4453}
.l{flex:none;width:29px;box-sizing:border-box}.r{flex:none;width:60px;display:flex;padding-left:3px;gap:4px;box-sizing:border-box}</style>
<div class="l"><tool-strip set="left" w="24"></tool-strip></div><slot></slot><div class="r"><tool-strip set="r1" w="25"></tool-strip><tool-strip set="r2" w="23"></tool-strip></div>`}}
class CadCanvas extends Base{html(){
const C='#00bfff',G='#808080';
let slots='';[217,253,287,322,358,394].forEach(y=>{slots+=`<rect x="1206" y="${y-6}" width="49" height="12" rx="4"/><rect x="1431" y="${y-6}" width="47" height="12" rx="4"/>`});
return `<style>:host{display:block;width:1831px;height:891px;position:relative;background:#000;flex:none}
svg{display:block}.lb{position:absolute;left:4px;top:4px;color:#d8d8d8;font-size:12px;line-height:17px;white-space:nowrap}
.nsv *{vector-effect:non-scaling-stroke}
</style>
<svg width="1831" height="891" viewBox="29 129 1831 891" fill="none" shape-rendering="crispEdges">
<path d="M29 688h1831" stroke="#666"/>
<rect x="733" y="675" width="21" height="21" fill="#0a7cff"/>
<g class="nsv" transform="translate(0,480) scale(.3827,.33333)" stroke="${C}">
<path d="M76 208H302V380H276V345Q276 325 262 325H76"/>
<path d="M276 360H260Q248 365 240 378L195 465H105L76 418"/>
<g stroke="${G}">
<path d="M232 328L190 420 183 450H115L105 410 76 350"/>
<path d="M142 208V250M155 208V250M142 280V304H156V280M134 267H164M149 245L164 267 149 288 134 267ZM134 326L150 338 166 326M142 330L150 334 158 330"/>
</g>
<path d="M1198 192L1230 150 1275 85 1310 73 1345 67 1400 85 1450 150 1490 200V425L1440 490 1390 545 1345 558 1290 545 1245 495 1198 432Z"/>
<path d="M1270 185L1290 130 1342 105 1395 130 1415 185V440L1400 465 1385 472H1300L1280 465 1270 440Z"/>
<g stroke="${G}">
<path d="M1278 188L1343 152 1410 188V445L1390 470M1278 188V445L1300 470"/>
<path d="M1343 378L1368 392 1374 415 1365 436 1343 448 1320 436 1312 415 1318 392Z"/>
${slots}
</g>
</g>
<g stroke="${C}" stroke-dasharray="3 1">
<path d="M820 488H900M820 488V530M820 530H900M828 533L821 538V637Q824 652 845 662H900"/>
</g>
<g stroke="${G}" stroke-dasharray="4 1">
<path d="M823 490H900M823 490V528H900M823 553H900"/>
</g>
<path d="M823 553V640Q827 656 845 660H900" stroke="${C}" stroke-dasharray="3 2"/>
<circle cx="869" cy="509" r="4.500" stroke="${G}" stroke-dasharray="2 1"/>
<path d="M866 509h6M869 506v6" stroke="#555"/>
<path d="M880 475H910V478H880Z" fill="#c80000"/>
<path d="M881.500 478H909L895 508Z" fill="#c80000"/>
<g transform="translate(1130,540) scale(.33333)" stroke-width="3">
<path d="M181 46L263 82 300 165 263 252 181 287 98 252 62 165 98 82Z" stroke="${C}"/>
<path d="M178 56L258 90 291 165 258 245 181 278 104 245 72 167 104 90Z" stroke="${G}"/>
<circle cx="181" cy="167" r="43" stroke="${G}"/>
<path d="M178 58L217 110 222 170M72 167L125 130 180 125M185 278L142 225 140 165M291 165L235 205 180 210" stroke="#444"/>
</g>
</svg>
<div class="lb">[一][俯视][二维线框]</div>
<cmd-area></cmd-area>
<slot></slot>`}}
class CmdArea extends Base{html(){return `<style>:host{position:absolute;left:0;bottom:0;width:470px;height:102px;display:block}
.h{position:absolute;left:59px;top:0;display:flex;flex-direction:column;gap:1px}
.h div{background:#505050;color:#b4b4b4;font-size:18px;line-height:22px;height:22px;padding:0 3px;border-radius:2px;white-space:nowrap;box-sizing:border-box;width:116px;font-weight:300}
.h div.s{width:49px;color:#eee}
.h b{font:400 18px/22px "Liberation Sans",sans-serif}
.h span{margin-left:16px}
.b{position:absolute;left:0;bottom:0;width:470px;height:33px;display:flex;background:#222a35;box-sizing:border-box;border:1px solid #111;border-radius:3px 3px 0 0}
.d{flex:none;width:55px;display:flex;align-items:center;padding-left:5px;gap:8px;box-sizing:border-box}
.gr{width:3px;height:18px;${DOTS}}
.in{flex:1;background:#ababab;display:flex;align-items:center;color:#5e5e5e;font-size:17px;font-style:italic;padding-left:3px;border-radius:2px 2px 0 0;font-weight:300}
.tr{margin-left:4px;width:0;height:0;border:4px solid transparent;border-top:5px solid #444;border-bottom:0}
.up{margin-left:auto;margin-right:3px;width:0;height:0;border:4px solid transparent;border-bottom:5px solid #555;border-top:0}
.ucs{position:absolute;left:0;top:0;pointer-events:none}</style>
<div class="h"><div>命令<b>:</b><span>*取消*</span></div><div>命令<b>:</b><span>*取消*</span></div><div class="s">命令<b>:</b></div></div>
<div class="b"><div class="d"><i class="gr"></i><cad-icon name="xx" size="12"></cad-icon><cad-icon name="wrench" size="15"></cad-icon></div>
<div class="in"><cad-icon name="term" size="16"></cad-icon><i class="tr"></i><span style="margin-left:6px">键入命令</span><i class="up"></i></div></div>
<svg class="ucs" width="100" height="102" viewBox="29 918 100 102" fill="none" stroke="#fff"><path d="M50.500 949V994M50.500 1003V1006M46.500 994.500h9v9h-9zM55 998.500h50M53 934l5 5 5-5M58 939v6M106 986l12 12M118 986l-12 12" /></svg>`}}
class CtxMenu extends Base{html(){return `<style>:host{position:absolute;left:867px;top:359px;width:197px;height:290px;box-sizing:border-box;background:#f0f0f0;border:1px solid #979797;outline:0;padding:0 2px;display:flex;flex-direction:column;box-shadow:0 0 0 .5px #aaa;font-size:12px;color:#111}
.v{position:absolute;left:28px;top:2px;bottom:2px;width:1px;background:#e2e3e3;border-right:1px solid #fff}</style><i class="v"></i><slot></slot>`}}
class CtxItem extends Base{html(){const hot=this.hasAttribute('hot'),ck=this.hasAttribute('checked');return `<style>:host{display:flex;align-items:center;height:22px;flex:none;position:relative;box-sizing:border-box;padding-left:31px;white-space:nowrap;font-size:12px;color:#111;z-index:1;${hot?'background:linear-gradient(#f4f8fd,#e4ecf7);border:1px solid #aeccf0;border-radius:3px;margin:0 0 0 -1px;padding-left:31px;width:192px;':''}}
.c{position:absolute;left:0;top:0;width:21px;height:21px;box-sizing:border-box;background:#eaf0fb;border:1px solid #b6cff0;border-radius:3px;display:flex;align-items:center;justify-content:center}</style>${ck?'<span class="c"><svg width="11" height="11" viewBox="0 0 11 11"><path d="M2 5.500l2.500 3L9 1" fill="none" stroke="#1c1c90" stroke-width="2"/></svg></span>':''}<slot></slot>`}}
class CadStatus extends Base{html(){
const box=(a,b,it)=>({x:a,w:b-a,h:`<div class="b" style="width:100%">${place(it,a)}</div>`});
const on=(a,b,n)=>({x:a,w:b-a,h:`<span class="on"><cad-icon name="${n}" size="16"></cad-icon></span>`});
const rightSide=place([
box(1341,1369,[tx(1344,24,'模型','color:#e8e8e8;font-size:12px')]),
box(1371,1435,[ic('grid',1382),ic('snap',1407),dd(1426)]),
box(1438,1541,[ic('ortho',1450),ic('polar',1474),dd(1494),ic('iso',1513),dd(1534)]),
box(1544,1607,[on(1545,1566,'osn'),on(1568,1590,'trk'),dd(1599)]),
box(1610,1720,[on(1611,1633,'anno1'),ic('anno2',1645),ic('anno3',1670),tx(1687,18,'1:1','color:#dde;font-size:12px'),dd(1712)]),
box(1723,1787,[ic('gear',1734,15),dd(1755),ic('plus',1776)]),
box(1791,1815,[ic('unit',1803)]),
box(1818,1867,[ic('warn1',1829),ic('warn2',1851)]),
box(1870,1920,[ic('full',1882),ic('ham',1906)])],240);
return `<style>:host{display:flex;height:30px;box-sizing:border-box;background:#222a35;padding-top:1px}${PS}
.tabs{flex:none;width:240px;display:flex;padding-left:12px;box-sizing:border-box;height:18px}
.t{flex:none;display:flex;align-items:center;justify-content:center;height:18px;background:#2d3541;border-radius:0 0 8px 8px;color:#a8aeb8;font-size:12px}
.a{background:#3b4453;color:#f0f0f0;font-weight:bold}
.r{display:flex;height:24px;margin-top:2px}
.b{display:flex;height:24px;background:#3b4453;align-items:center}
.on{display:flex;width:100%;height:100%;background:#4a7fb5;align-items:center;justify-content:center}</style>
<div class="tabs"><div class="t a" style="width:45px">模型</div><div class="t" style="width:61px">设集志</div><div class="t" style="width:82px">关注公众号</div><div class="t" style="width:22px;margin-left:5px;font-size:15px;font-weight:bold">+</div></div>
<div class="r">${rightSide}</div>`}}
class TaskBtn extends Base{html(){return `<style>:host{display:flex;flex:none;box-sizing:border-box;height:100%;align-items:center;padding-left:var(--pl,8px);gap:4px;color:#fff;font-size:12px;white-space:nowrap;overflow:hidden;text-shadow:0 0 3px #0008}</style><cad-icon name="${this.getAttribute('icon')}" size="15"></cad-icon><slot></slot>`}}
class CadTaskbar extends Base{html(){
const tray=place([ic('kbd',1660,16),ic('vol',1691,15),ic('wechat',1716,16),ic('nv',1739,16),ic('spk',1762,16),ic('yg',1787,16),ic('ie',1811,16),ic('net',1835,16),tx(1862,32,'17:32','color:#fff;font-size:12.500px;text-align:center'),
{x:1906,w:13,h:'<i style="display:block;width:13px;height:100%;box-sizing:border-box;border:1px solid #8fa8bc;background:linear-gradient(#5a86a8,#3c6888)"></i>'}],1186);
const g=`linear-gradient(#5f6f86,#46566e 45%,#3c4c64)`;
return `<style>:host{display:flex;height:30px;position:relative;box-sizing:border-box;background:linear-gradient(90deg,#2b4359,#45708f 50%,#3f6a89);border-top:1px solid #6d8aa0}${PS}
.o{position:absolute;left:9px;top:-5px;line-height:0}
.gr{flex:none;display:flex;height:27px;border:1px solid #8a99aa;box-sizing:border-box;border-radius:2px;box-shadow:inset 0 0 0 1px #2c3a4a;overflow:hidden}
task-btn{background:${g};border-right:1px solid #7a8898}
.act{background:linear-gradient(#d2d6da,#a6adb6 45%,#8f97a2)!important;text-shadow:0 0 3px #333;border-right:0}
.tr{display:flex;height:28px;align-items:center}</style>
<div class="o"><cad-icon name="orb" size="38"></cad-icon></div>
<div class="gr" style="margin-left:60px;width:318px"><task-btn icon="folder" style="width:159px">E:\\张鹤\\51 2022七...</task-btn><task-btn icon="folder" style="width:159px;border-right:0">C:\\Users\\Administr...</task-btn></div>
<div class="gr" style="margin-left:4px;width:477px"><task-btn icon="acad" style="width:159px">烫乐 长丰祥和中央...</task-btn><task-btn icon="acad" style="width:160px">室内设计师专屋CAD...</task-btn><task-btn icon="acad" class="act" style="width:158px;border-right:0">最全CAD图库以及动...</task-btn></div>
<div class="gr" style="margin-left:5px;width:158px"><task-btn icon="ie" style="width:158px;border-right:0;background:linear-gradient(90deg,#56657a 40%,#46718f)">最全CAD图库以及动...</task-btn></div>
<div class="gr" style="margin-left:4px;width:158px"><task-btn icon="wechat" style="width:158px;border-right:0;background:linear-gradient(#7f9db2,#49718f 45%,#3f6a89)">微信</task-btn></div>
<div class="tr">${tray}</div>`}}
[['cad-icon',CadIcon],['cad-combo',CadCombo],['cad-app',CadApp],['cad-header',CadHeader],['cad-tabs',CadTabs],['cad-toolbars',CadToolbars],['tool-strip',ToolStrip],['cad-work',CadWork],['cad-canvas',CadCanvas],['cmd-area',CmdArea],['ctx-menu',CtxMenu],['ctx-item',CtxItem],['cad-status',CadStatus],['task-btn',TaskBtn],['cad-taskbar',CadTaskbar]].forEach(([n,c])=>customElements.define(n,c));
</script>
</body></html>
